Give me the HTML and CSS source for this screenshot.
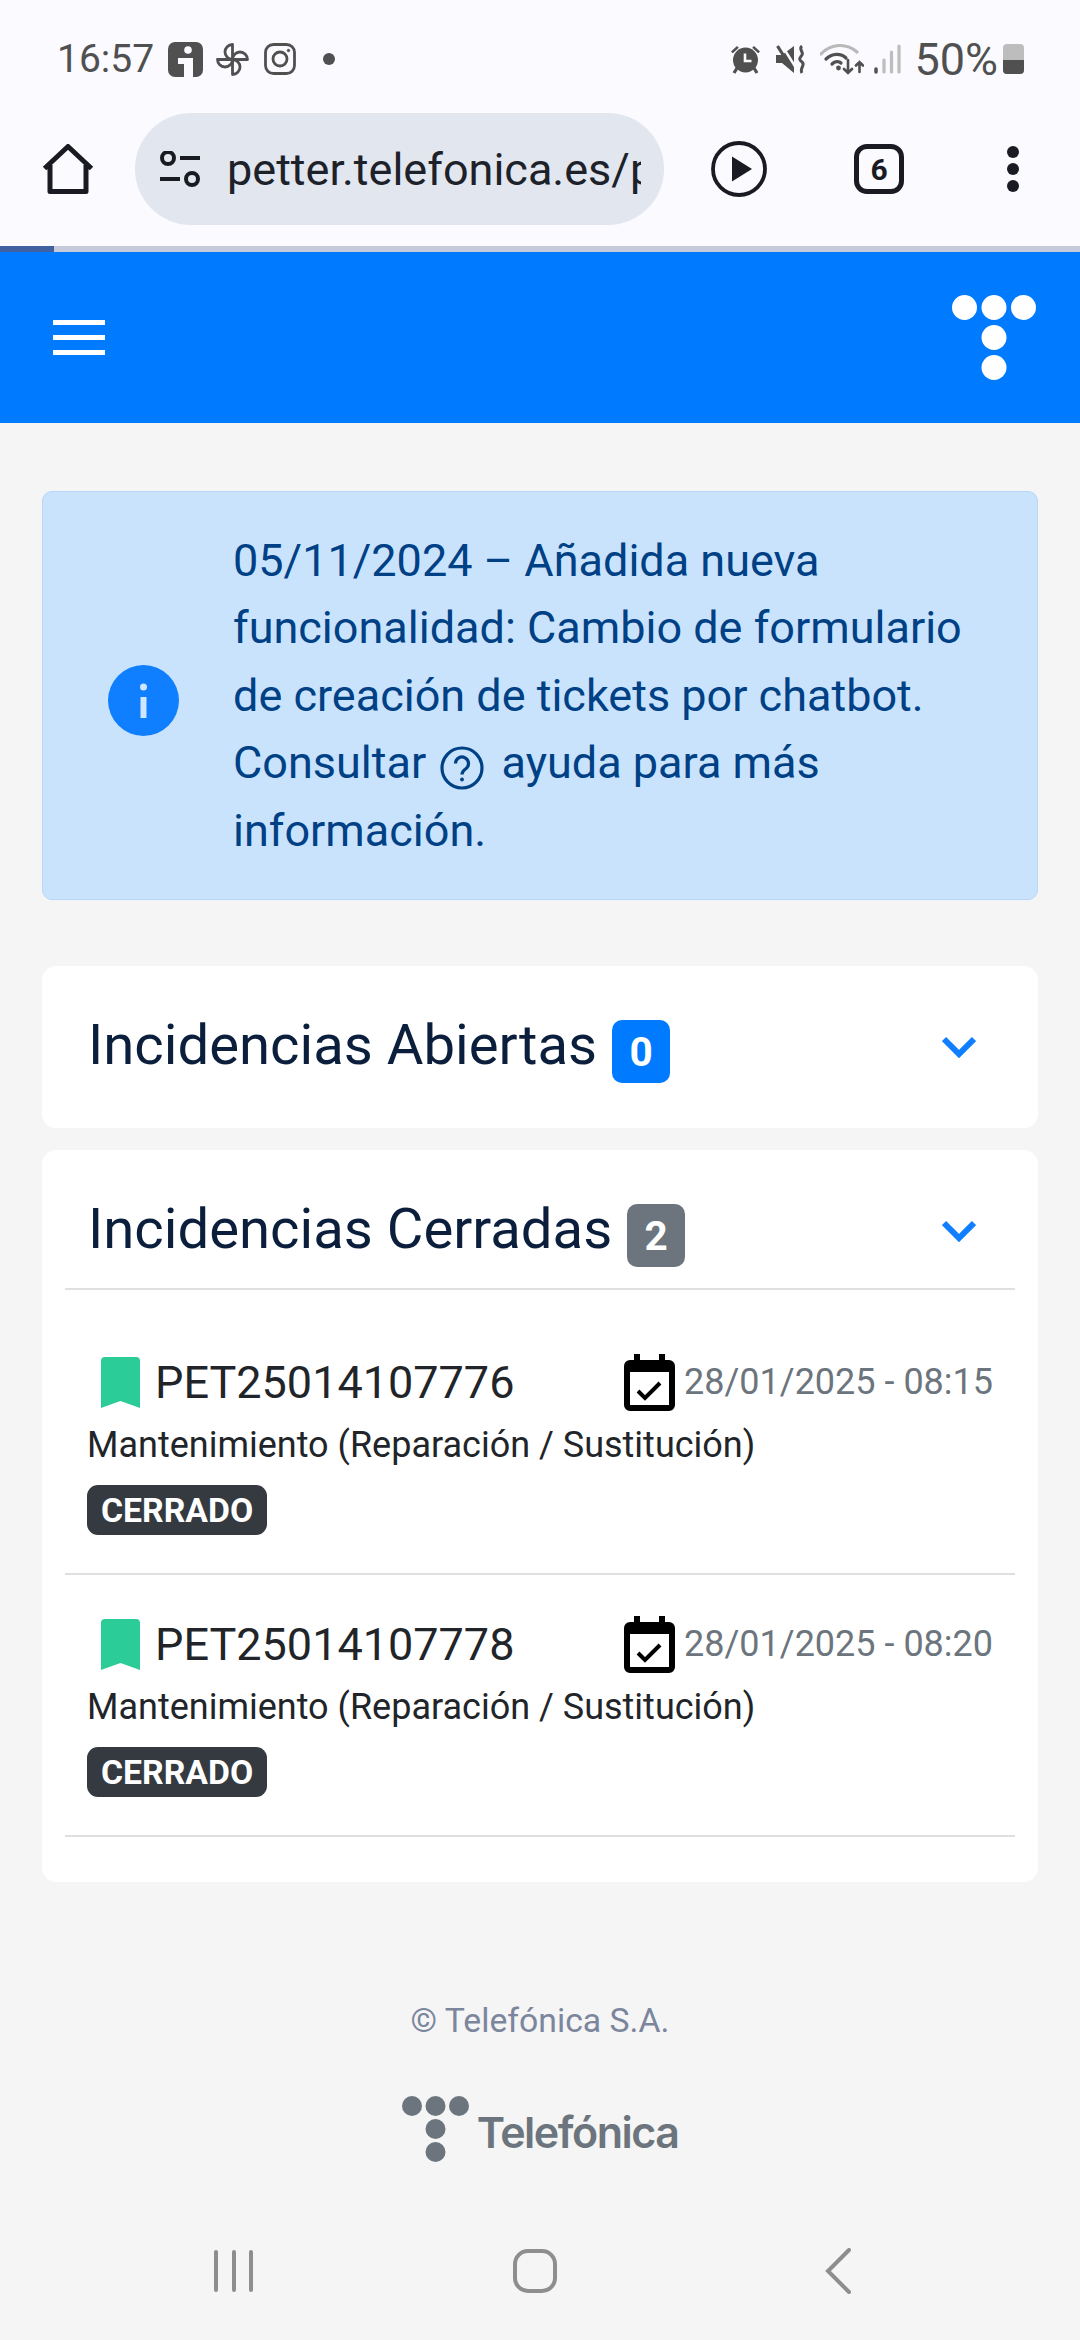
FILE: index.html
```html
<!DOCTYPE html>
<html lang="es">
<head>
    <meta charset="UTF-8">
    <meta name="viewport" content="width=device-width, initial-scale=1.0">
    <title>Petter</title>
    <link rel="stylesheet" href="styles.css">
</head>
<body>

    <!-- barra de estado -->
    <div class="status-bar">
        <span class="clock">16:57</span>
        <svg class="st-icon st-info" viewBox="0 0 35 35"><rect width="35" height="35" rx="7" fill="#505050"/><circle cx="20" cy="8" r="3.800" fill="#fafaff"/><path d="M10 16h15v19h-9V22h-6z" fill="#fafaff"/></svg>
        <svg class="st-icon st-wheel" viewBox="0 0 35 35" fill="none" stroke="#505050" stroke-width="2.800" stroke-linejoin="round"><path d="M17.500 17.500V2.500A7.500 7.500 0 0 0 17.500 17.500z"/><path d="M17.500 17.500H32.500A7.500 7.500 0 0 0 17.500 17.500z"/><path d="M17.500 17.500V32.500A7.500 7.500 0 0 0 17.500 17.500z"/><path d="M17.500 17.500H2.500A7.500 7.500 0 0 0 17.500 17.500z"/></svg>
        <svg class="st-icon st-insta" viewBox="0 0 32 32" fill="none" stroke="#505050" stroke-width="2.800"><rect x="1.500" y="1.500" width="29" height="29" rx="8"/><circle cx="16" cy="16" r="7"/><circle cx="24.500" cy="7.500" r="1.200" fill="#505050" stroke-width="1"/></svg>
        <span class="st-dot"></span>
        <span class="st-space"></span>
        <svg class="st-icon st-alarm" viewBox="0 0 29 29"><path d="M0 6.500 6 1l1.800 1.800-6 5.500zM29 6.500 23 1l-1.800 1.800 6 5.500z" fill="#505050"/><circle cx="14.500" cy="15" r="12.500" fill="#505050"/><path d="M14 8.500v7.500h6.500" fill="none" stroke="#fafaff" stroke-width="2.600"/><path d="M6 23l-3 5M23 23l3 5" stroke="#505050" stroke-width="3.200"/></svg>
        <svg class="st-icon st-mute" viewBox="0 0 29 29" fill="#505050"><path d="M0 10h6L18 1v27L6 18H0z"/><path d="M5 -1l17 27" stroke="#fafaff" stroke-width="2.500"/><path d="M1.500 1l15 24" stroke="#505050" stroke-width="3.200"/><path d="M26 1c-4 3 2 6 0 9s-4 4 0 7-3 6 0 11" fill="none" stroke="#505050" stroke-width="3"/></svg>
        <svg class="st-icon st-wifi" viewBox="0 0 44 32" fill="none" stroke-linecap="round"><path d="M1 11C11 0 27 0 37 9" stroke="#b9b9b9" stroke-width="3.200"/><path d="M6 16c6-6 15-6 20-1M12 21c3-3 7-3 9-1" stroke="#505050" stroke-width="3.200"/><circle cx="18.500" cy="25" r="2.400" fill="#505050"/><path d="M28 17v13M24 26l4 4 4-4M39.500 29V19M36 22.500l3.500-3.500 3.500 3.500" stroke="#505050" stroke-width="2.600"/></svg>
        <svg class="st-icon st-signal" viewBox="0 0 27 30" stroke-linecap="round"><path d="M2 28v-3" stroke="#505050" stroke-width="3.500"/><path d="M10 28V16M17.500 28V8M25 28V2" stroke="#bdbdbd" stroke-width="3.200"/></svg>
        <span class="battery-text">50%</span>
        <span class="battery"><span class="battery-level"></span></span>
    </div>

    <!-- barra del navegador -->
    <div class="browser-bar">
        <svg class="home-icon" viewBox="0 0 52 50" fill="none" stroke="#1a1a22" stroke-width="5" stroke-linejoin="round"><path d="M2.500 24.500 26 2.500l23.500 22M8 21v26.500h36V21"/></svg>
        <div class="url-pill">
            <svg class="tune-icon" viewBox="0 0 42 36" fill="none" stroke="#1a1a22" stroke-width="4"><circle cx="9" cy="7" r="6"/><path d="M21 7h20M1 28h20"/><circle cx="33" cy="28" r="6"/></svg>
            <span class="url-text">petter.telefonica.es/p</span>
        </div>
        <svg class="play-icon" viewBox="0 0 56 56"><circle cx="28" cy="28" r="26" fill="none" stroke="#1a1a22" stroke-width="3.800"/><path d="M21 15.500 41 28 21 40.500z" fill="#1a1a22"/></svg>
        <span class="tab-count">6</span>
        <span class="more-dots"><i></i><i></i><i></i></span>
    </div>
    <div class="progress"><div class="progress-fill"></div></div>

    <header class="topbar">
        <div class="burger"><i></i><i></i><i></i></div>
        <svg class="topbar-logo" viewBox="0 0 84 85" fill="#fff"><circle cx="12.500" cy="12.500" r="12.500"/><circle cx="42" cy="12.500" r="12.500"/><circle cx="71.500" cy="12.500" r="12.500"/><circle cx="42" cy="42.500" r="12.500"/><circle cx="42" cy="72.500" r="12.500"/></svg>
    </header>

    <main class="container">
        <div class="alert-info">
            <svg class="alert-icon" viewBox="0 0 71 71"><circle cx="35.500" cy="35.500" r="35.500" fill="#0f7fff"/><circle cx="35.500" cy="22" r="3.500" fill="#cfe6ff"/><rect x="32.500" y="32" width="6" height="21" fill="#cfe6ff"/></svg>
            <p class="alert-text">05/11/2024 – Añadida nueva funcionalidad: Cambio de formulario de creación de tickets por chatbot. Consultar <svg class="help-icon" viewBox="0 0 44 44" fill="none" stroke="#004085" stroke-width="3.200"><circle cx="22" cy="22" r="20"/><path d="M15.500 17.500a6.500 6.500 0 1 1 10 5.500c-2.200 1.500-3.500 2.600-3.500 5.500"/><circle cx="22" cy="33.500" r="1.900" fill="#004085" stroke="none"/></svg> ayuda para más información.</p>
        </div>

        <section class="card card-open">
            <div class="card-head">
                <h2 class="card-title">Incidencias Abiertas</h2>
                <span class="count count-blue">0</span>
                <svg class="chevron" viewBox="0 0 34 22" fill="none" stroke="#0f7fff" stroke-width="6"><path d="M2 3l15 15L32 3"/></svg>
            </div>
        </section>

        <section class="card card-closed">
            <div class="card-head card-head-line">
                <h2 class="card-title">Incidencias Cerradas</h2>
                <span class="count count-grey">2</span>
                <svg class="chevron" viewBox="0 0 34 22" fill="none" stroke="#0f7fff" stroke-width="6"><path d="M2 3l15 15L32 3"/></svg>
            </div>
            <ul class="ticket-list">
                <li class="ticket">
                    <div class="ticket-top">
                        <svg class="bookmark" viewBox="0 0 39 51"><path d="M0 4a4 4 0 0 1 4-4h31a4 4 0 0 1 4 4v47l-19.500-7L0 51z" fill="#2bcc97"/></svg>
                        <span class="ticket-id">PET25014107776</span>
                        <svg class="calendar" viewBox="0 0 51 57"><path d="M10 0h6v6h19V0h6v6h4a6 6 0 0 1 6 6v39a6 6 0 0 1-6 6H6a6 6 0 0 1-6-6V12a6 6 0 0 1 6-6h4z" fill="#000"/><path d="M6 18h39v33H6z" fill="#fff"/><path d="M14 37l7 7 15-15" fill="none" stroke="#000" stroke-width="4"/></svg>
                        <span class="ticket-date">28/01/2025 - 08:15</span>
                    </div>
                    <p class="ticket-desc">Mantenimiento (Reparación / Sustitución)</p>
                    <span class="ticket-state">CERRADO</span>
                </li>
                <li class="ticket">
                    <div class="ticket-top">
                        <svg class="bookmark" viewBox="0 0 39 51"><path d="M0 4a4 4 0 0 1 4-4h31a4 4 0 0 1 4 4v47l-19.500-7L0 51z" fill="#2bcc97"/></svg>
                        <span class="ticket-id">PET25014107778</span>
                        <svg class="calendar" viewBox="0 0 51 57"><path d="M10 0h6v6h19V0h6v6h4a6 6 0 0 1 6 6v39a6 6 0 0 1-6 6H6a6 6 0 0 1-6-6V12a6 6 0 0 1 6-6h4z" fill="#000"/><path d="M6 18h39v33H6z" fill="#fff"/><path d="M14 37l7 7 15-15" fill="none" stroke="#000" stroke-width="4"/></svg>
                        <span class="ticket-date">28/01/2025 - 08:20</span>
                    </div>
                    <p class="ticket-desc">Mantenimiento (Reparación / Sustitución)</p>
                    <span class="ticket-state">CERRADO</span>
                </li>
            </ul>
        </section>
    </main>

    <footer class="page-footer">
        <p class="copyright">© Telefónica S.A.</p>
        <div class="footer-logo">
            <svg class="footer-mark" viewBox="0 0 68 66" fill="#6c757d"><ellipse cx="10" cy="10" rx="10" ry="10"/><ellipse cx="33.500" cy="10" rx="10" ry="10"/><ellipse cx="57" cy="10" rx="10" ry="10"/><ellipse cx="33.500" cy="33" rx="10" ry="10"/><ellipse cx="33.500" cy="56" rx="10" ry="10"/></svg>
            <span class="footer-name">Telefónica</span>
        </div>
    </footer>

    <!-- botones de navegación del sistema -->
    <nav class="system-nav">
        <span class="nav-recents"><i></i><i></i><i></i></span>
        <span class="nav-home"></span>
        <svg class="nav-back" viewBox="0 0 26 46" fill="none" stroke="#8e8e8e" stroke-width="4" stroke-linecap="round"><path d="M24 2 3 23l21 21"/></svg>
    </nav>

</body>
</html>
```

FILE: styles.css
```css
* {
    box-sizing: border-box;
}
body {
    font-family: 'Roboto', sans-serif;
    margin: 0;
    width: 1080px;
    height: 2340px;
    overflow: hidden;
    background-color: #f5f5f5;
    color: #212529;
    display: flex;
    flex-direction: column;
}

/* barra de estado */
.status-bar {
    height: 112px;
    background-color: #fafaff;
    display: flex;
    align-items: center;
    padding: 6px 56px 0 57px;
    color: #505050;
}
.clock {
    font-size: 39px;
    width: 111px;
}
.st-icon {
    display: block;
    flex: none;
}
.st-info { width: 35px; height: 35px; }
.st-wheel { width: 35px; height: 35px; margin-left: 12px; }
.st-insta { width: 32px; height: 32px; margin-left: 14px; }
.st-dot {
    width: 12px;
    height: 12px;
    border-radius: 50%;
    background-color: #505050;
    margin-left: 27px;
}
.st-space {
    flex: 1;
}
.st-alarm { width: 29px; height: 29px; }
.st-mute { width: 29px; height: 29px; margin-left: 16px; }
.st-wifi { width: 44px; height: 32px; margin-left: 15px; }
.st-signal { width: 27px; height: 30px; margin-left: 10px; }
.battery-text {
    font-size: 45px;
    margin-left: 13px;
}
.battery {
    width: 21px;
    height: 30px;
    margin-left: 5px;
    background-color: #bdbdbd;
    border-radius: 4px;
    display: flex;
    align-items: flex-end;
    overflow: hidden;
}
.battery-level {
    width: 100%;
    height: 47%;
    background-color: #505050;
}

/* barra del navegador */
.browser-bar {
    height: 134px;
    background-color: #fafaff;
    display: flex;
    align-items: center;
    padding: 0 0 20px 42px;
}
.home-icon {
    width: 52px;
    height: 50px;
}
.url-pill {
    width: 529px;
    height: 112px;
    margin-left: 41px;
    background-color: #e1e6ef;
    border-radius: 56px;
    display: flex;
    align-items: center;
    padding: 0 23px 0 24px;
}
.tune-icon {
    width: 42px;
    height: 36px;
    flex: none;
}
.url-text {
    font-size: 45px;
    margin-left: 26px;
    color: #1d2129;
    white-space: nowrap;
    overflow: hidden;
    flex: 1;
}
.play-icon {
    width: 56px;
    height: 56px;
    margin-left: 47px;
}
.tab-count {
    width: 50px;
    height: 50px;
    margin-left: 87px;
    border: 5px solid #1a1a22;
    border-radius: 13px;
    font-size: 30px;
    font-weight: 700;
    color: #1a1a22;
    display: flex;
    align-items: center;
    justify-content: center;
}
.more-dots {
    display: flex;
    flex-direction: column;
    gap: 5px;
    margin-left: 103px;
}
.more-dots i {
    display: block;
    width: 12px;
    height: 12px;
    border-radius: 50%;
    background-color: #1a1a22;
}
.progress {
    height: 6px;
    background-color: #c6cadb;
}
.progress-fill {
    width: 54px;
    height: 100%;
    background-color: #41609f;
}

/* cabecera azul */
.topbar {
    height: 171px;
    background-color: #007bff;
    display: flex;
    align-items: center;
    justify-content: space-between;
    padding: 0 44px 0 53px;
}
.burger {
    display: flex;
    flex-direction: column;
    gap: 10px;
}
.burger i {
    display: block;
    width: 52px;
    height: 5px;
    background-color: #fff;
}
.topbar-logo {
    width: 84px;
    height: 85px;
}

.container {
    padding: 68px 42px 0;
}

.alert-info {
    height: 409px;
    background-color: #c9e3fd;
    border: 1px solid #b6d8fb;
    border-radius: 10px;
    color: #004085;
    display: flex;
    align-items: center;
    padding-left: 65px;
    margin-bottom: 66px;
}
.alert-icon {
    width: 71px;
    height: 71px;
    flex: none;
    margin-top: 9px;
}
.alert-text {
    font-size: 45px;
    line-height: 67.500px;
    margin: 0 0 0 54px;
    width: 740px;
}
.help-icon {
    width: 44px;
    height: 44px;
    vertical-align: -12px;
    margin: 0 6px 0 3px;
}

.card {
    background-color: #fff;
    border-radius: 14px;
}
.card-open {
    height: 162px;
    margin-bottom: 22px;
}
.card-closed {
    height: 732px;
}
.card-head {
    height: 140px;
    margin: 0 23px;
    padding: 48px 40px 0 23px;
    display: flex;
}
.card-head-line {
    border-bottom: 2px solid #e0e0e0;
}
.card-title {
    font-size: 56.250px;
    line-height: 62px;
    font-weight: 400;
    color: #0b1f3d;
    margin: 0;
}
.count {
    width: 58px;
    height: 63px;
    margin: 6px 0 0 15px;
    border-radius: 10px;
    color: #fff;
    font-size: 40.500px;
    font-weight: 700;
    display: flex;
    align-items: center;
    justify-content: center;
}
.count-blue {
    background-color: #007bff;
}
.count-grey {
    background-color: #6c757d;
}
.chevron {
    width: 34px;
    height: 22px;
    margin: 22px -1px 0 auto;
}

.ticket-list {
    list-style-type: none;
    margin: 23px 23px 0;
    padding: 0;
}
.ticket {
    height: 262px;
    padding: 39px 0 0 22px;
    border-bottom: 2px solid #e0e0e0;
}
.ticket-top {
    height: 60px;
    display: flex;
    align-items: center;
    padding-left: 14px;
}
.bookmark {
    width: 39px;
    height: 51px;
    flex: none;
    margin-top: 1px;
}
.ticket-id {
    font-size: 45px;
    color: #212529;
    margin-left: 15px;
    width: 469px;
}
.calendar {
    width: 51px;
    height: 57px;
    flex: none;
}
.ticket-date {
    font-size: 36px;
    color: #6c757d;
    margin-left: 9px;
    white-space: nowrap;
}
.ticket-desc {
    font-size: 36px;
    line-height: 54px;
    margin: 6px 0 13px;
}
.ticket-state {
    display: inline-flex;
    align-items: center;
    height: 50px;
    padding: 0 14px;
    background-color: #343a40;
    border-radius: 11px;
    color: #fff;
    font-size: 33.750px;
    font-weight: 700;
}

.page-footer {
    text-align: center;
    margin-top: 114px;
}
.copyright {
    font-size: 33.750px;
    line-height: 50px;
    color: #7b869d;
    margin: 0;
}
.footer-logo {
    display: flex;
    justify-content: center;
    margin-top: 50px;
}
.footer-mark {
    width: 68px;
    height: 66px;
}
.footer-name {
    font-family: 'Inter', sans-serif;
    font-size: 43px;
    font-weight: 600;
    letter-spacing: -1.500px;
    line-height: 50px;
    color: #6c757d;
    margin: 11px 0 0 7px;
}

.system-nav {
    margin-top: auto;
    height: 138px;
    display: flex;
    align-items: center;
    padding-left: 214px;
}
.nav-recents {
    display: flex;
    gap: 13.500px;
}
.nav-recents i {
    display: block;
    width: 4px;
    height: 42px;
    border-radius: 2px;
    background-color: #8e8e8e;
}
.nav-home {
    width: 44px;
    height: 44px;
    margin-left: 260px;
    border: 4px solid #8e8e8e;
    border-radius: 15px;
}
.nav-back {
    width: 26px;
    height: 46px;
    margin-left: 268px;
}
```
